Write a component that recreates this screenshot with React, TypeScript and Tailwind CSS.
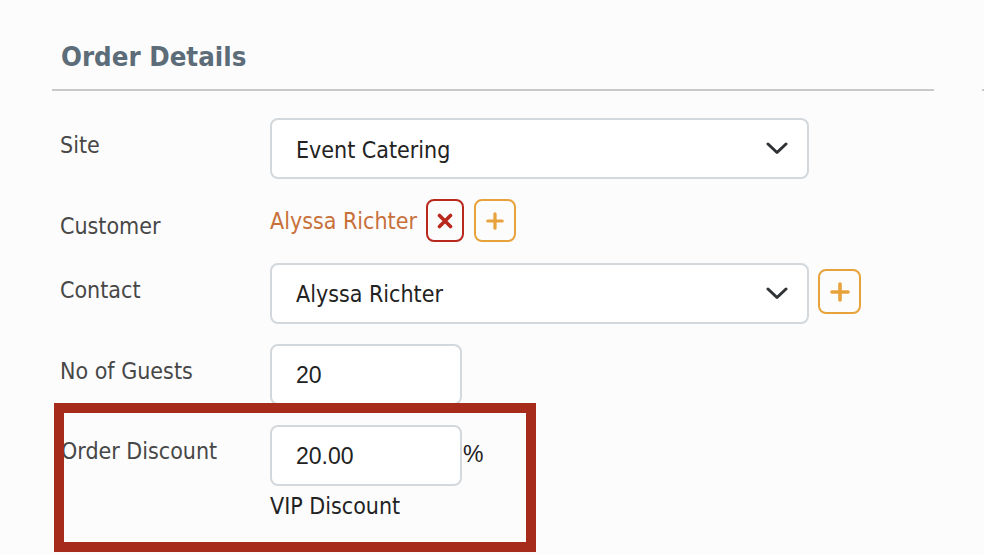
import React from "react";

const Chevron = () => (
  <svg width="22" height="13" viewBox="0 0 22 13" fill="none">
    <path d="M2 2 L11 10.5 L20 2" stroke="#2f3336" strokeWidth="3" strokeLinecap="round" strokeLinejoin="round" />
  </svg>
);

const Plus = ({ size = 18 }: { size?: number }) => (
  <svg width={size} height={size} viewBox="0 0 20 20" fill="none">
    <path d="M10 2 V18 M2 10 H18" stroke="#e8a23c" strokeWidth="3.6" strokeLinecap="round" />
  </svg>
);

const Cross = () => (
  <svg width="16" height="16" viewBox="0 0 16 16" fill="none">
    <path d="M2.5 2.5 L13.5 13.5 M13.5 2.5 L2.5 13.5" stroke="#b8281c" strokeWidth="3.6" strokeLinecap="round" />
  </svg>
);

export default function App() {
  const sans = "font-['DejaVu_Sans_Condensed','DejaVu_Sans',sans-serif] font-stretch-condensed";
  return (
    <div className={`relative w-[984px] h-[554px] overflow-hidden bg-[#fcfcfc] ${sans}`}>
      <div className="pl-[52px] pt-[38px]">
        <h1 className="pl-[9px] text-[27.4px] leading-[38px] font-bold text-[#5c6c78]">Order Details</h1>
        <div className="flex items-center mt-[13px]">
          <div className="w-[882px] h-[2px] bg-[#c9c9c9]" />
          <div className="ml-[48px] w-[2px] h-[2px] bg-[#c9c9c9]" />
        </div>

        <div className="mt-[27px] flex flex-col text-[23px] leading-[30px]">
          {/* Site */}
          <div className="flex items-start">
            <div className="w-[218px] pl-[8px] pt-[12px] text-[#474747]">Site</div>
            <div className="w-[539px] h-[61px] rounded-[8px] border-2 border-[#d3d8dc] bg-white flex items-center justify-between pl-[24px] pr-[19px] text-[#222]">
              <span className="pt-[2px]">Event Catering</span>
              <Chevron />
            </div>
          </div>

          {/* Customer */}
          <div className="flex items-start mt-[20px]">
            <div className="w-[218px] pl-[8px] pt-[12px] text-[#474747]">Customer</div>
            <div className="flex items-center h-[43px]">
              <span className="text-[#c8703a]">Alyssa Richter</span>
              <button className="ml-[9px] w-[38px] h-[43px] rounded-[8px] border-2 border-[#b8281c] flex items-center justify-center">
                <Cross />
              </button>
              <button className="ml-[10px] w-[42px] h-[43px] rounded-[8px] border-2 border-[#e8a23c] flex items-center justify-center">
                <Plus size={18} />
              </button>
            </div>
          </div>

          {/* Contact */}
          <div className="flex items-start mt-[21px]">
            <div className="w-[218px] pl-[8px] pt-[12px] text-[#474747]">Contact</div>
            <div className="w-[539px] h-[61px] rounded-[8px] border-2 border-[#d3d8dc] bg-white flex items-center justify-between pl-[24px] pr-[19px] text-[#222]">
              <span>Alyssa Richter</span>
              <Chevron />
            </div>
            <button className="ml-[9px] mt-[6px] w-[43px] h-[45px] rounded-[8px] border-2 border-[#e8a23c] flex items-center justify-center">
              <Plus size={20} />
            </button>
          </div>

          {/* Guests */}
          <div className="flex items-start mt-[20px]">
            <div className="w-[218px] pl-[8px] pt-[12px] text-[#474747]">No of Guests</div>
            <div className="w-[192px] h-[61px] rounded-[8px] border-2 border-[#d3d8dc] bg-white flex items-center pl-[24px] font-['Liberation_Sans',Arial,sans-serif] text-[#222]">
              20
            </div>
          </div>

          {/* Discount */}
          <div className="flex items-start mt-[20px]">
            <div className="w-[218px] pl-[9px] pt-[11px] text-[#474747]">Order Discount</div>
            <div className="flex flex-col">
              <div className="flex items-center">
                <div className="w-[192px] h-[61px] rounded-[8px] border-2 border-[#d3d8dc] bg-white flex items-center pl-[24px] font-['Liberation_Sans',Arial,sans-serif] text-[#222]">
                  20.00
                </div>
                <span className="ml-[1px] -mt-[4px] font-['Liberation_Sans',Arial,sans-serif] text-[#222]">%</span>
              </div>
              <div className="mt-[5px] text-[#222]">VIP Discount</div>
            </div>
          </div>
        </div>
      </div>

      {/* annotation box */}
      <div className="absolute left-[54px] top-[403px] w-[482px] h-[149px] border-[10px] border-[#a62b1a] pointer-events-none" />
    </div>
  );
}
